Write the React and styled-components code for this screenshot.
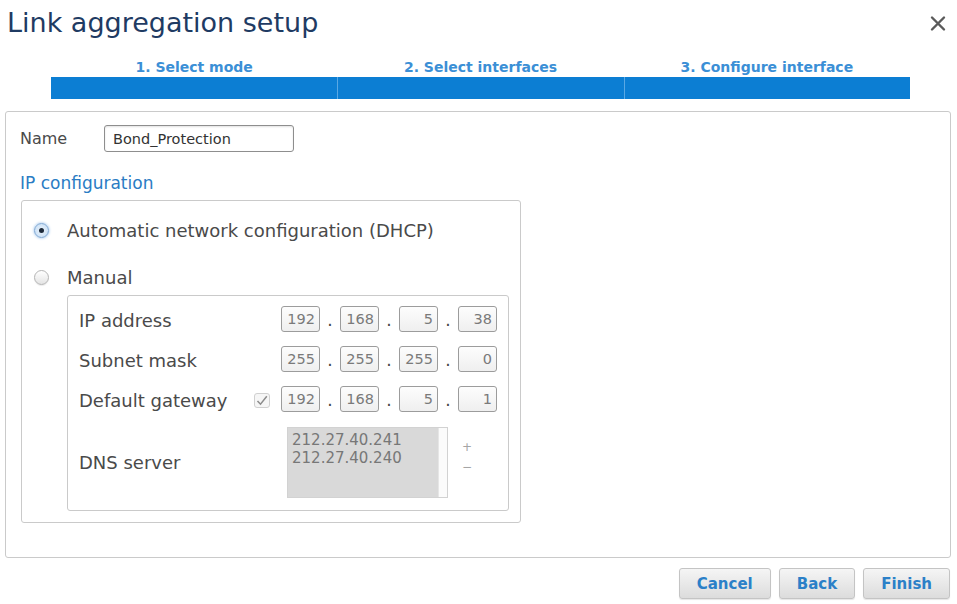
import styled, { createGlobalStyle } from "styled-components";

const GlobalStyle = createGlobalStyle`
  body {
    margin: 0;
    background: #fff;
    font-family: "DejaVu Sans", "Liberation Sans", sans-serif;
  }
`;

const steps = ["1. Select mode", "2. Select interfaces", "3. Configure interface"];

const ipRows = [
  { label: "IP address", values: ["192", "168", "5", "38"] },
  { label: "Subnet mask", values: ["255", "255", "255", "0"] },
  { label: "Default gateway", values: ["192", "168", "5", "1"], check: true },
];

const App = () => {
  return (
    <>
      <GlobalStyle />
      <StyledWizard>
        <header className="head">
          <h1 className="title">Link aggregation setup</h1>
          <svg className="close" width="16" height="17" viewBox="0 0 16 17">
            <path d="M2 2.5 L14 14.5 M14 2.5 L2 14.5" stroke="#5a5a5a" strokeWidth="2.4" strokeLinecap="round" />
          </svg>
        </header>

        <Steps>
          {steps.map((step) => (
            <Step key={step}>
              <div className="label">{step}</div>
              <div className="bar" />
            </Step>
          ))}
        </Steps>

        <Panel>
          <NameRow>
            <span className="name-label">Name</span>
            <TextInput defaultValue="Bond_Protection" />
          </NameRow>

          <SectionTitle>IP configuration</SectionTitle>

          <Fieldset>
            <RadioRow>
              <Radio $checked />
              <span>Automatic network configuration (DHCP)</span>
            </RadioRow>
            <RadioRow $gap={19}>
              <Radio />
              <span>Manual</span>
            </RadioRow>

            <ManualBox>
              {ipRows.map((row) => (
                <FieldRow key={row.label}>
                  <FieldLabel>{row.label}</FieldLabel>
                  <CheckSlot>
                    {row.check && (
                      <CheckBox>
                        <svg width="12" height="11" viewBox="0 0 12 11">
                          <path d="M1.5 6 L4.5 9.2 L10.8 1.2" fill="none" stroke="#8c8c8c" strokeWidth="1.5" />
                        </svg>
                      </CheckBox>
                    )}
                  </CheckSlot>
                  <IpGroup>
                    {row.values.map((v, i) => (
                      <span key={i} className="part">
                        {i > 0 && <span className="dot">.</span>}
                        <Octet>{v}</Octet>
                      </span>
                    ))}
                  </IpGroup>
                </FieldRow>
              ))}

              <FieldRow $tall>
                <FieldLabel>DNS server</FieldLabel>
                <DnsList>
                  <div className="items">
                    <div>212.27.40.241</div>
                    <div>212.27.40.240</div>
                  </div>
                  <div className="scroll" />
                </DnsList>
                <ListButtons>
                  <span>+</span>
                  <span>−</span>
                </ListButtons>
              </FieldRow>
            </ManualBox>
          </Fieldset>
        </Panel>

        <Footer>
          <Button>Cancel</Button>
          <Button>Back</Button>
          <Button>Finish</Button>
        </Footer>
      </StyledWizard>
    </>
  );
};

const StyledWizard = styled.div`
  width: 957px;
  height: 604px;
  overflow: hidden;

  .head {
    display: flex;
    justify-content: space-between;
    align-items: flex-start;
    height: 43px;
    padding: 0 11px 0 7px;
  }
  .title {
    margin: 3px 0 0;
    font-weight: 400;
    font-size: 27px;
    line-height: 40px;
    color: #1f3b63;
  }
  .close {
    margin-top: 15px;
  }
`;

const Steps = styled.div`
  display: flex;
  margin: 14px 0 0 51px;
  width: 859px;
`;

const Step = styled.div`
  flex: 1;
  .label {
    height: 20px;
    line-height: 20px;
    text-align: center;
    font-weight: 700;
    font-size: 14px;
    color: #3b8fd6;
  }
  .bar {
    height: 22px;
    background: #0c7ed3;
    border-left: 1px solid #5aa8e4;
  }
  &:first-child .bar {
    border-left: none;
  }
`;

const Panel = styled.section`
  box-sizing: border-box;
  margin: 12px 6px 0 5px;
  height: 447px;
  border: 1px solid #cacaca;
  border-radius: 3px;
  padding: 13px 14px;
`;

const NameRow = styled.div`
  display: flex;
  align-items: center;
  height: 27px;
  .name-label {
    width: 84px;
    font-size: 16px;
    color: #4a4a4a;
  }
`;

const TextInput = styled.input`
  box-sizing: border-box;
  width: 190px;
  height: 27px;
  border: 1px solid #8e8e8e;
  border-radius: 3px;
  padding: 0 8px;
  font-family: inherit;
  font-size: 14.5px;
  color: #333;
  box-shadow: inset 0 1px 2px rgba(0, 0, 0, 0.12);
  outline: none;
`;

const SectionTitle = styled.div`
  margin-top: 20px;
  line-height: 22px;
  font-size: 17px;
  color: #2a7cc4;
`;

const Fieldset = styled.div`
  box-sizing: border-box;
  margin: 6px 0 0 1px;
  width: 500px;
  border: 1px solid #cacaca;
  border-radius: 3px;
  padding: 15px 11px 11px 12px;
`;

const RadioRow = styled.div`
  display: flex;
  align-items: center;
  gap: 18px;
  height: 28px;
  margin-top: ${(p) => p.$gap || 0}px;
  font-size: 18px;
  color: #4a4a4a;
`;

const Radio = styled.span`
  box-sizing: border-box;
  position: relative;
  width: 15px;
  height: 15px;
  border-radius: 50%;
  border: 1px solid ${(p) => (p.$checked ? "#7ea7d4" : "#b4b4b4")};
  background: ${(p) =>
    p.$checked ? "radial-gradient(#eaf3fc, #c4dcf3)" : "linear-gradient(#ffffff, #e4e4e4)"};
  box-shadow: ${(p) => (p.$checked ? "0 0 3px #8cb9e8" : "0 1px 1px rgba(0,0,0,0.08)")};
  &::after {
    content: "";
    display: ${(p) => (p.$checked ? "block" : "none")};
    position: absolute;
    left: 4px;
    top: 4px;
    width: 5px;
    height: 5px;
    border-radius: 50%;
    background: #1d2a3a;
  }
`;

const ManualBox = styled.div`
  margin: 4px 0 0 33px;
  border: 1px solid #cacaca;
  border-radius: 3px;
  padding: 11px 11px 12px;
  display: flex;
  flex-direction: column;
  gap: 14px;
`;

const FieldRow = styled.div`
  display: flex;
  align-items: center;
  height: ${(p) => (p.$tall ? 71 : 26)}px;
`;

const FieldLabel = styled.div`
  width: 175px;
  font-size: 18px;
  color: #4a4a4a;
`;

const CheckSlot = styled.div`
  width: 16px;
  margin-right: 11px;
`;

const CheckBox = styled.div`
  box-sizing: border-box;
  width: 16px;
  height: 15px;
  border: 1px solid #d0d0d0;
  border-radius: 3px;
  background: #f6f6f6;
  display: flex;
  align-items: center;
  justify-content: center;
`;

const IpGroup = styled.div`
  display: flex;
  .part {
    display: flex;
  }
  .dot {
    width: 20px;
    text-align: center;
    font-size: 17px;
    line-height: 28px;
    color: #444;
  }
`;

const Octet = styled.div`
  box-sizing: border-box;
  width: 39px;
  height: 26px;
  border: 1px solid #9c9c9c;
  border-radius: 3px;
  background: linear-gradient(#fdfdfd, #efefef);
  padding-right: 4px;
  text-align: right;
  line-height: 24px;
  font-size: 14.5px;
  color: #7a7a7a;
`;

const DnsList = styled.div`
  box-sizing: border-box;
  display: flex;
  margin-left: 33px;
  width: 161px;
  height: 71px;
  border: 1px solid #d2d2d2;
  background: #d9d9d9;
  .items {
    flex: 1;
    padding: 3px 0 0 4px;
    font-size: 15px;
    line-height: 18px;
    color: #777;
  }
  .scroll {
    width: 8px;
    background: #fbfbfb;
    border-left: 1px solid #e6e6e6;
  }
`;

const ListButtons = styled.div`
  display: flex;
  flex-direction: column;
  gap: 4px;
  margin: -12px 0 0 14px;
  font-size: 12px;
  line-height: 16px;
  color: #a5a5a5;
`;

const Footer = styled.div`
  display: flex;
  justify-content: flex-end;
  gap: 8px;
  margin-top: 10px;
  padding-right: 7px;
`;

const Button = styled.button`
  box-sizing: border-box;
  height: 31px;
  padding: 0 17px;
  border: 1px solid #c4c4c4;
  border-radius: 3px;
  background: linear-gradient(#f5f5f5, #dcdcdc);
  box-shadow: 0 1px 1px rgba(0, 0, 0, 0.1);
  font-family: inherit;
  font-weight: 700;
  font-size: 15px;
  color: #2b80c8;
`;

export default App;
